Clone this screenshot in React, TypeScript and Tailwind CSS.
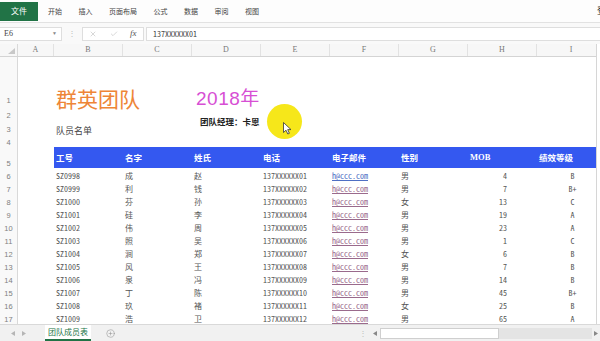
import { X, Check, CirclePlus } from 'lucide-react'

const LETTERS = ['A', 'B', 'C', 'D', 'E', 'F', 'G', 'H', 'I']
const WIDTHS = ['w-[36px]', 'w-[69px]', 'w-[69px]', 'w-[69px]', 'w-[69px]', 'w-[69px]', 'w-[69px]', 'w-[69px]', 'w-[69px]']
const TABS = ['开始', '插入', '页面布局', '公式', '数据', '审阅', '视图']
const HEADERS = ['工号', '名字', '姓氏', '电话', '电子邮件', '性别', 'MOB', '绩效等级']

const PEOPLE: [string, string, string, string, number, string][] = [
  ['SZ0998', '成', '赵', '男', 4, 'B'],
  ['SZ0999', '利', '钱', '男', 7, 'B+'],
  ['SZ1000', '芬', '孙', '女', 13, 'C'],
  ['SZ1001', '硅', '李', '男', 19, 'A'],
  ['SZ1002', '伟', '周', '男', 23, 'A'],
  ['SZ1003', '照', '吴', '男', 1, 'C'],
  ['SZ1004', '涧', '郑', '女', 6, 'B'],
  ['SZ1005', '风', '王', '男', 7, 'B'],
  ['SZ1006', '泉', '冯', '男', 14, 'B'],
  ['SZ1007', '丁', '陈', '男', 45, 'B+'],
  ['SZ1008', '玖', '褚', '女', 25, 'B'],
  ['SZ1009', '浩', '卫', '男', 65, 'A'],
]

const cjk = "font-['Noto_Sans_CJK_SC',sans-serif]"
const mono = "font-['Noto_Sans_Mono_CJK_SC','Noto_Sans_CJK_SC',monospace]"

function RowHead({ n }: { n: number }) {
  return (
    <div className="flex w-[18px] shrink-0 items-end justify-center border-r border-[#d9d9d9] bg-[#f9f9f9] pb-[1px] font-['Liberation_Sans',sans-serif] text-[7.5px] leading-none text-[#808080]">
      {n}
    </div>
  )
}

function Ribbon() {
  return (
    <div className={`flex h-[23px] shrink-0 items-center border-b border-[#e2e2e2] bg-[#fdfdfd] ${cjk}`}>
      <div className="flex h-[19px] w-[38px] items-center justify-center bg-[#217346] text-[8px] text-white">文件</div>
      <div className="ml-[10px] flex gap-[16.5px] text-[7px] text-[#444]">
        {TABS.map(t => (
          <span key={t}>{t}</span>
        ))}
      </div>
      <span className="ml-auto -mr-[6px] text-[9px] text-[#333]">登</span>
    </div>
  )
}

function FormulaBar() {
  return (
    <div className="flex h-[21px] shrink-0 items-center bg-[#f9f9f9] font-['Liberation_Serif',serif]">
      <div className="flex h-[14px] w-[62px] items-center justify-between border-y border-r border-[#dedede] bg-white px-[4px] text-[8px] text-[#444]">
        <span>E6</span>
        <span className="text-[5px] text-[#888]">▼</span>
      </div>
      <span className="ml-[6px] text-[8px] leading-none text-[#bbb]">⋮</span>
      <div className="ml-[6px] flex h-[14px] w-[62px] items-center gap-[9px] border border-[#dedede] bg-white pl-[6px]">
        <X size={8} strokeWidth={1.4} className="text-[#aaa]" />
        <Check size={8} strokeWidth={1.4} className="ml-[4px] text-[#aaa]" />
        <span className="ml-[3px] text-[9px] italic leading-none text-[#555]">fx</span>
      </div>
      <div className={`ml-[2px] flex h-[14px] flex-1 items-center border-y border-l border-[#dedede] bg-white pl-[6px] text-[8px] text-[#444] ${mono}`}>
        137XXXXXX01
      </div>
    </div>
  )
}

function ColumnHeads() {
  return (
    <div className="flex h-[13px] shrink-0 border-b border-[#d4d4d4] bg-[#f7f7f7] font-['Liberation_Serif',serif] text-[8px] text-[#777]">
      <div className="flex w-[18px] shrink-0 items-end justify-end border-r border-[#d9d9d9] pb-[2px] pr-[2px]">
        <svg width="7" height="6" viewBox="0 0 7 6">
          <path d="M7 0 L7 6 L0 6 Z" fill="#c8c8c8" />
        </svg>
      </div>
      {LETTERS.map((l, i) => (
        <div key={l} className={`${WIDTHS[i]} flex shrink-0 items-center justify-center border-r border-[#e2e2e2]`}>
          {l}
        </div>
      ))}
    </div>
  )
}

function DataRow({ n, p }: { n: number; p: [string, string, string, string, number, string] }) {
  const cell = 'flex shrink-0 items-end pb-[1px] pl-[2px] leading-none'
  const mail = n === 6 ? 'text-[#4f6fc4]' : 'text-[#9a6a8c]'
  return (
    <div className={`flex h-[13px] shrink-0 text-[8px] text-[#555] ${mono}`}>
      <RowHead n={n} />
      <div className="w-[36px] shrink-0" />
      <div className={`${cell} w-[69px]`}>{p[0]}</div>
      <div className={`${cell} w-[69px]`}>{p[1]}</div>
      <div className={`${cell} w-[69px]`}>{p[2]}</div>
      <div className={`${cell} w-[69px]`}>137XXXXXX{String(n - 5).padStart(2, '0')}</div>
      <div className={`${cell} w-[69px]`}>
        <span className={`underline decoration-[0.5px] underline-offset-[1px] ${mail}`}>h@ccc.com</span>
      </div>
      <div className={`${cell} w-[69px]`}>{p[3]}</div>
      <div className={`${cell} w-[69px] justify-end pr-[30px]`}>{p[4]}</div>
      <div className={`${cell} w-[69px] justify-center`}>{p[5]}</div>
    </div>
  )
}

function SheetBar() {
  return (
    <div className="flex h-[17px] shrink-0 items-stretch border-t border-[#d9d9d9] bg-[#f1f1f1]">
      <div className="flex w-[45px] items-center gap-[7px] pl-[11px]">
        <svg width="4" height="5" viewBox="0 0 4 5">
          <path d="M4 0 L0 2.5 L4 5 Z" fill="#b5b5b5" />
        </svg>
        <svg width="4" height="5" viewBox="0 0 4 5">
          <path d="M0 0 L4 2.5 L0 5 Z" fill="#b5b5b5" />
        </svg>
      </div>
      <div className={`flex w-[46px] items-center justify-center border-b-2 border-[#217346] bg-white text-[8px] text-[#217346] ${cjk}`}>
        团队成员表
      </div>
      <div className="flex w-[38px] items-center justify-center">
        <CirclePlus size={9} strokeWidth={1.3} className="text-[#888]" />
      </div>
      <div className="flex flex-1 items-center justify-end">
        <span className="mr-[6px] text-[8px] leading-none text-[#bbb]">⋮</span>
        <svg width="4" height="5" viewBox="0 0 4 5" className="mr-[3px]">
          <path d="M4 0 L0 2.5 L4 5 Z" fill="#888" />
        </svg>
        <div className="h-[11px] w-[119px] border border-[#cfcfcf] bg-white" />
        <div className="h-[11px] w-[93px] bg-[#e4e4e4]" />
        <svg width="4" height="5" viewBox="0 0 4 5" className="mx-[2px]">
          <path d="M0 0 L4 2.5 L0 5 Z" fill="#888" />
        </svg>
      </div>
    </div>
  )
}

export default function App() {
  return (
    <div className="relative flex h-[341px] w-[600px] flex-col overflow-hidden bg-white">
      <Ribbon />
      <FormulaBar />
      <div className="flex min-h-0 flex-1">
        <div className="flex w-[597px] shrink-0 flex-col overflow-hidden border-r border-[#d6d6d6]">
          <ColumnHeads />

          <div className="flex h-[48px] shrink-0 items-stretch">
            <RowHead n={1} />
            <div className="w-[36px] shrink-0" />
            <div className="flex w-[138px] shrink-0 items-end pl-[2px]">
              <span className={`-mb-[4px] text-[21px] leading-none text-[#ee8537] ${cjk}`}>群英团队</span>
            </div>
            <div className="flex w-[69px] shrink-0 items-end pl-[4px]">
              <span className="-mb-[3px] whitespace-nowrap font-['Liberation_Sans','Noto_Sans_CJK_SC',sans-serif] text-[19px] leading-none tracking-[0.5px] text-[#d74fd4]">
                2018年
              </span>
            </div>
          </div>

          <div className="flex h-[15px] shrink-0">
            <RowHead n={2} />
            <div className="w-[174px] shrink-0" />
            <div className="flex w-[69px] shrink-0 items-end pl-[8px]">
              <span className={`-mb-[5px] whitespace-nowrap text-[8.5px] font-bold leading-none text-[#222] ${cjk}`}>团队经理：卡恩</span>
            </div>
          </div>

          <div className="flex h-[14px] shrink-0">
            <RowHead n={3} />
            <div className="w-[36px] shrink-0" />
            <div className="flex w-[69px] shrink-0 items-end pl-[2px]">
              <span className={`-mb-[1px] text-[9px] leading-none text-[#444] ${cjk}`}>队员名单</span>
            </div>
          </div>

          <div className="flex h-[13px] shrink-0">
            <RowHead n={4} />
          </div>

          <div className="flex h-[21px] shrink-0">
            <RowHead n={5} />
            <div className="w-[36px] shrink-0" />
            {HEADERS.map(h => (
              <div
                key={h}
                className={`flex w-[69px] shrink-0 items-center bg-[#3458f0] pl-[2px] text-[8.5px] font-bold text-white ${h === 'MOB' ? "font-['Liberation_Serif',serif] text-[7.5px]" : cjk}`}
              >
                {h}
              </div>
            ))}
          </div>

          {PEOPLE.map((p, i) => (
            <DataRow key={p[0]} n={i + 6} p={p} />
          ))}
        </div>
        <div className="flex-1 bg-white" />
      </div>
      <SheetBar />

      <div className="absolute left-[267px] top-[104px] h-[35px] w-[35px] rounded-full bg-[#f6e71a]">
        <svg width="9" height="13" viewBox="0 0 9 13" className="ml-[16px] mt-[18px]">
          <path d="M0.5 0.5 L0.5 10.5 L3 8.2 L4.8 12 L6.4 11.3 L4.7 7.6 L8 7.6 Z" fill="white" stroke="#333" strokeWidth="0.8" />
        </svg>
      </div>
    </div>
  )
}
